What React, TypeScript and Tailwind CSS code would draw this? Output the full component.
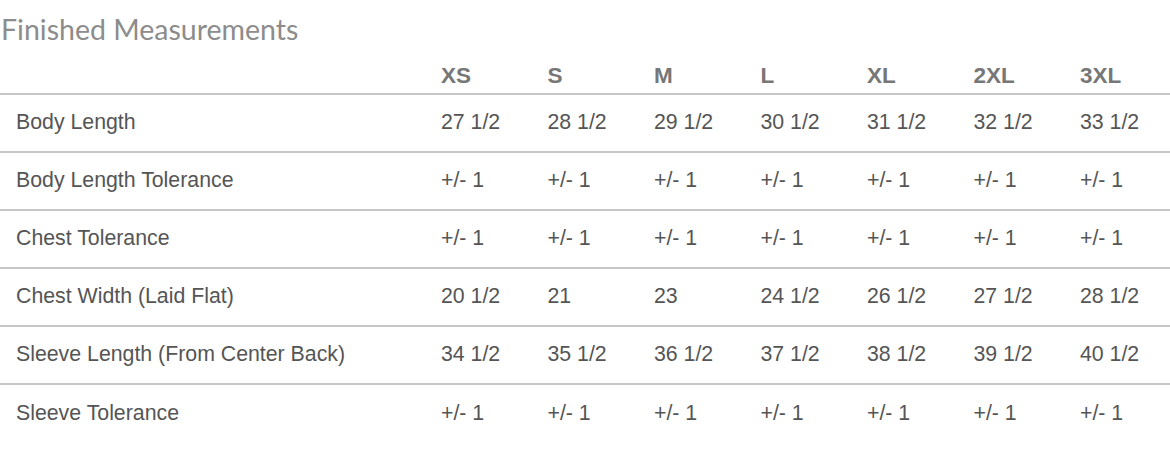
import React from "react";

const sizes = ["XS", "S", "M", "L", "XL", "2XL", "3XL"];
const rows: [string, string[]][] = [
  ["Body Length", ["27 1/2", "28 1/2", "29 1/2", "30 1/2", "31 1/2", "32 1/2", "33 1/2"]],
  ["Body Length Tolerance", ["+/- 1", "+/- 1", "+/- 1", "+/- 1", "+/- 1", "+/- 1", "+/- 1"]],
  ["Chest Tolerance", ["+/- 1", "+/- 1", "+/- 1", "+/- 1", "+/- 1", "+/- 1", "+/- 1"]],
  ["Chest Width (Laid Flat)", ["20 1/2", "21", "23", "24 1/2", "26 1/2", "27 1/2", "28 1/2"]],
  ["Sleeve Length (From Center Back)", ["34 1/2", "35 1/2", "36 1/2", "37 1/2", "38 1/2", "39 1/2", "40 1/2"]],
  ["Sleeve Tolerance", ["+/- 1", "+/- 1", "+/- 1", "+/- 1", "+/- 1", "+/- 1", "+/- 1"]],
];

const grid = "grid grid-cols-[441px_106.5px_106.5px_106.5px_106.5px_106.5px_106.5px_1fr] items-center";

export default function App() {
  return (
    <div className="w-[1170px] h-[459px] bg-white overflow-hidden">
      <div
        className="h-[58px] pt-[15px] pl-[1px] text-[28.5px] leading-[28px] text-[#8c8c8c]"
        style={{ fontFamily: "Lato, 'Noto Sans', sans-serif" }}
      >
        Finished Measurements
      </div>
      <div style={{ fontFamily: "'Liberation Sans', Arial, sans-serif" }}>
        <div className={`${grid} h-[37px] text-[22.5px] font-bold text-[#777777] border-b-2 border-[#c6c6c6]`}>
          <div />
          {sizes.map((s) => (
            <div key={s}>{s}</div>
          ))}
        </div>
        {rows.map(([label, vals], i) => (
          <div
            key={label}
            className={`${grid} h-[58px] text-[21.3px] text-[#555555] ${i < rows.length - 1 ? "border-b-2 border-[#c6c6c6]" : ""}`}
          >
            <div className="pl-[16px]">{label}</div>
            {vals.map((v, j) => (
              <div key={j}>{v}</div>
            ))}
          </div>
        ))}
      </div>
    </div>
  );
}
